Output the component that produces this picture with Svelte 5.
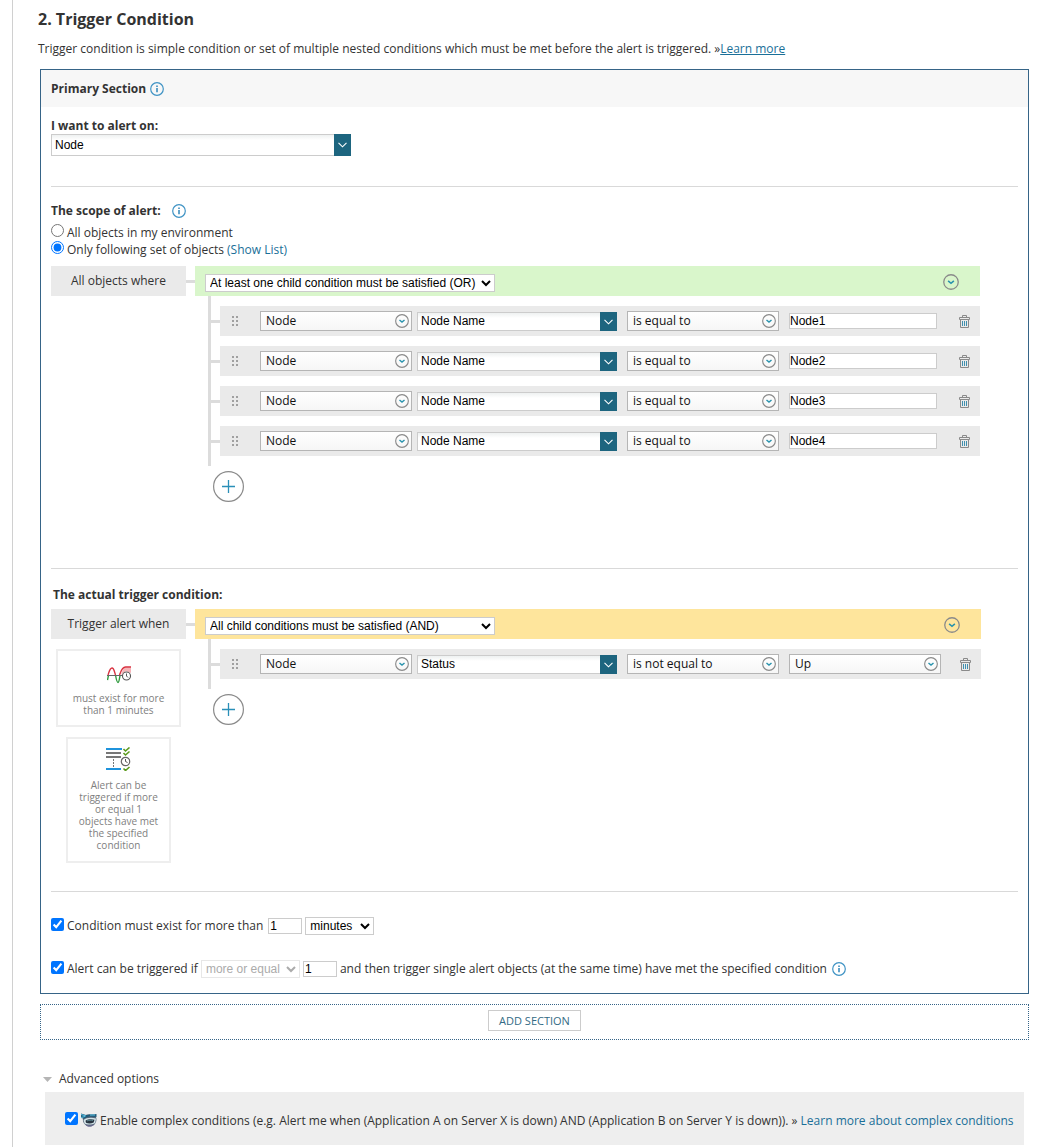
<script lang="ts">
  type Condition = {
    id: number;
    object: string;
    field: string;
    operator: string;
    value: string;
    kind: 'text' | 'select';
  };

  type Group = {
    id: string;
    label: string;
    tone: 'any' | 'all';
    mode: string;
    conditions: Condition[];
  };

  const OR = 'At least one child condition must be satisfied (OR)';
  const AND = 'All child conditions must be satisfied (AND)';

  let alertOn = $state('Node');
  let scopeType = $state('set');
  let mustExist = $state(true);
  let duration = $state('1');
  let unit = $state('minutes');
  let limitObjects = $state(true);
  let comparison = $state('more or equal');
  let objectCount = $state('1');
  let complexEnabled = $state(true);
  let advancedOpen = $state(true);

  let scope: Group = $state({
    id: 'scope',
    label: 'All objects where',
    tone: 'any',
    mode: OR,
    conditions: [1, 2, 3, 4].map((n) => ({
      id: n,
      object: 'Node',
      field: 'Node Name',
      operator: 'is equal to',
      value: `Node${n}`,
      kind: 'text',
    })),
  });

  let trigger: Group = $state({
    id: 'trigger',
    label: 'Trigger alert when',
    tone: 'all',
    mode: AND,
    conditions: [
      { id: 1, object: 'Node', field: 'Status', operator: 'is not equal to', value: 'Up', kind: 'select' },
    ],
  });

  function addCondition(group: Group) {
    const last = group.conditions[group.conditions.length - 1];
    const id = Math.max(0, ...group.conditions.map((c) => c.id)) + 1;
    group.conditions.push({
      id,
      object: 'Node',
      field: last?.field ?? 'Node Name',
      operator: 'is equal to',
      value: '',
      kind: last?.kind ?? 'text',
    });
  }

  function removeCondition(group: Group, id: number) {
    group.conditions = group.conditions.filter((c) => c.id !== id);
  }
</script>

{#snippet infoIcon()}
  <svg class="info" viewBox="0 0 14 14" width="14" height="14" aria-hidden="true">
    <circle cx="7" cy="7" r="6.3" fill="none" stroke="#3f93c4" stroke-width="1.2" />
    <path d="M7 6v4.3M7 3.6v1.4" stroke="#2f86ba" stroke-width="1.5" />
  </svg>
{/snippet}

{#snippet circleChevron(size: number)}
  <svg class="circle-chevron" viewBox="0 0 15 15" width={size} height={size} aria-hidden="true">
    <circle cx="7.5" cy="7.5" r="6.8" fill="none" stroke="#8a8a8a" stroke-width="1.2" />
    <path d="M4.8 6.4l2.7 2.3 2.7-2.3" fill="none" stroke="#2a93ad" stroke-width="1.5" />
  </svg>
{/snippet}

{#snippet pick(item: Condition, key: 'object' | 'operator' | 'value', label: string)}
  <div class="pick">
    <select aria-label={label} bind:value={item[key]}>
      <option>{item[key]}</option>
    </select>
    {@render circleChevron(14)}
  </div>
{/snippet}

{#snippet chevronBlock()}
  <span class="chevron-block">
    <svg viewBox="0 0 9 6" width="9" height="6" aria-hidden="true">
      <path d="M0.5 0.8l4 4 4-4" fill="none" stroke="#fff" stroke-width="1.1" />
    </svg>
  </span>
{/snippet}

{#snippet builder(group: Group)}
  <div class="builder">
    <div class="bar {group.tone}">
      <select class="native mode" aria-label="Child conditions" bind:value={group.mode}>
        <option>{OR}</option>
        <option>{AND}</option>
      </select>
      <button type="button" class="icon-button" aria-label="Group actions">
        {@render circleChevron(16)}
      </button>
    </div>

    <ul class="conditions">
      {#each group.conditions as item (item.id)}
        <li>
          <div class="row">
            <svg class="handle" viewBox="0 0 6 10" width="6" height="10" aria-hidden="true">
              <path d="M0 0h2v2H0zM4 0h2v2H4zM0 4h2v2H0zM4 4h2v2H4zM0 8h2v2H0zM4 8h2v2H4z" fill="#a0a0a0" />
            </svg>
            {@render pick(item, 'object', 'Object')}
            <div class="combo">
              <input type="text" aria-label="Property" bind:value={item.field} />
              {@render chevronBlock()}
            </div>
            {@render pick(item, 'operator', 'Operator')}
            {#if item.kind === 'select'}
              {@render pick(item, 'value', 'Value')}
            {:else}
              <input class="box value" type="text" aria-label="Value" bind:value={item.value} />
            {/if}
            <button
              type="button"
              class="icon-button remove"
              aria-label="Delete condition"
              onclick={() => removeCondition(group, item.id)}
            >
              <svg viewBox="0 0 11 13" width="11" height="13" aria-hidden="true">
                <path d="M0.5 4.500V2.500h10v2zM3.500 2.500v-2h4v2M1.500 4.500v8h8v-8" fill="none" stroke="#8a8a8a" />
                <path d="M3.500 6v5M5.500 6v5M7.500 6v5" stroke="#3f8fae" />
              </svg>
            </button>
          </div>
        </li>
      {/each}
    </ul>

    <button type="button" class="icon-button add" aria-label="Add condition" onclick={() => addCondition(group)}>
      <svg viewBox="0 0 31 31" width="31" height="31" aria-hidden="true">
        <circle cx="15.5" cy="15.5" r="14.9" fill="#fff" stroke="#8a8a8a" stroke-width="1.2" />
        <path d="M9 15.5h13M15.5 9v13" stroke="#2a8fb8" stroke-width="1.3" />
      </svg>
    </button>
  </div>
{/snippet}

<main class="page">
  <h2>2. Trigger Condition</h2>
  <p class="intro">
    Trigger condition is simple condition or set of multiple nested conditions which must be met before the alert is
    triggered. »<a class="underlined" href="#learn-more">Learn more</a>
  </p>

  <section class="section">
    <header>
      <h3>Primary Section</h3>
      {@render infoIcon()}
    </header>

    <div class="block alert-on">
      <label class="title" for="alert-on">I want to alert on:</label>
      <div class="combo large">
        <input id="alert-on" type="text" bind:value={alertOn} />
        {@render chevronBlock()}
      </div>
    </div>

    <div class="block scope">
      <div class="scope-title">
        <h4 class="title">The scope of alert:</h4>
        {@render infoIcon()}
      </div>
      <div class="radio">
        <input id="scope-all" type="radio" name="scope" value="all" bind:group={scopeType} />
        <label for="scope-all">All objects in my environment</label>
      </div>
      <div class="radio">
        <input id="scope-set" type="radio" name="scope" value="set" bind:group={scopeType} />
        <label for="scope-set">Only following set of objects</label>
        <a href="#show-list">(Show List)</a>
      </div>
      <div class="tree">
        <div class="side">
          <div class="tree-label">{scope.label}</div>
        </div>
        {@render builder(scope)}
      </div>
    </div>

    <div class="block actual">
      <h4 class="title indented">The actual trigger condition:</h4>
      <div class="tree wide">
        <div class="side">
          <div class="tree-label">{trigger.label}</div>
          <div class="card">
            <svg viewBox="0 0 24 18" width="24" height="18" aria-hidden="true">
              <path d="M14 9C16 3 17 1.500 19 1.500H24V7L19 5l-5 4z" fill="#f6b4b8" />
              <path d="M1 9C2 6 3 2 5 2s2.500 4 3.500 7M12.500 9C14 5 15 1 18.500 1H24" fill="none" stroke="#d8303f" stroke-width="1.4" />
              <path d="M0.500 14C1 12 1 11 1.500 9.500M8.500 9c.7 4 1.500 7.500 2.500 7.500s1.500-4 2-7" fill="none" stroke="#2f9a3d" stroke-width="1.4" />
              <path d="M0 9.500h15" stroke="#666" />
              <circle cx="19.500" cy="10" r="4" fill="#fff" stroke="#555" stroke-width="1.1" />
              <path d="M19.500 7.500V10l1.500 1.500" fill="none" stroke="#555" />
            </svg>
            <p>must exist for more than 1 minutes</p>
          </div>
          <div class="card narrow">
            <svg viewBox="0 0 25 24" width="25" height="24" aria-hidden="true">
              <path d="M0 2h16M0 22h15" stroke="#1f93dc" stroke-width="2" />
              <path d="M0 6h15M0 10h15" stroke="#777" stroke-width="2" />
              <path d="M7.500 12v9" stroke="#777" stroke-dasharray="2 1" />
              <path d="M17.500 2l2 2 4-3.500M17.500 6l2 2 4-3.500M17.500 21.500l2 2 4-3.500" fill="none" stroke="#5a9a1c" stroke-width="1.6" />
              <circle cx="19.500" cy="14.500" r="4.200" fill="#fff" stroke="#666" stroke-width="1.2" />
              <path d="M19.500 12v2.500l2 1" fill="none" stroke="#555" />
            </svg>
            <p>Alert can be triggered if more or equal 1 objects have met the specified condition</p>
          </div>
        </div>
        {@render builder(trigger)}
      </div>
    </div>

    <div class="block limits">
      <div class="line">
        <input id="must-exist" type="checkbox" bind:checked={mustExist} />
        <label class="spaced" for="must-exist">Condition must exist for more than</label>
        <input class="box number" type="text" aria-label="Duration" bind:value={duration} />
        <select class="native unit" aria-label="Duration unit" bind:value={unit}>
          <option>seconds</option>
          <option>minutes</option>
          <option>hours</option>
        </select>
      </div>
      <div class="line">
        <input id="limit-objects" type="checkbox" bind:checked={limitObjects} />
        <label for="limit-objects">Alert can be triggered if</label>
        <select class="native comparison" aria-label="Comparison" disabled bind:value={comparison}>
          <option>more or equal</option>
        </select>
        <input class="box number" type="text" aria-label="Object count" bind:value={objectCount} />
        <span class="spaced">and then trigger single alert objects (at the same time) have met the specified condition</span>
        {@render infoIcon()}
      </div>
    </div>
  </section>

  <div class="add-section">
    <button type="button">ADD SECTION</button>
  </div>

  <button
    type="button"
    class="advanced-toggle"
    aria-expanded={advancedOpen}
    onclick={() => (advancedOpen = !advancedOpen)}
  >
    <svg viewBox="0 0 9 5" width="9" height="5" aria-hidden="true"><path d="M0 0h9L4.500 5z" fill="#b5b5b5" /></svg>
    Advanced options
  </button>

  {#if advancedOpen}
    <div class="advanced line">
      <input id="complex" type="checkbox" bind:checked={complexEnabled} />
      <svg class="goggles" viewBox="0 0 16 14" width="16" height="14" aria-hidden="true">
        <path d="M2 4C4 1 12 0 15 4c1.500 4-1 9-6 9.500C4 13.500 1 9 2 4z" fill="#56677a" />
        <path d="M0 0.500l5 1.500L15.500 1v3L8 3.500 3 5.500 0 5z" fill="#1f5a78" />
        <path d="M0 1.500l5 1.500M0 4.500l4-1M9 2h5" stroke="#5ec4e6" />
        <path d="M2.500 7C5 4.500 11 4 15 5.500l-.8 4.500C11 12 6 12 3.500 10.500z" fill="#d3e3e8" />
        <path d="M4.500 7.800C7 6 11 6 13.500 6.800l-.8 2.700C10 10.800 7 10.500 5 9.800z" fill="#27343f" />
        <path d="M6 8c2-1 4-1 6-.6" fill="none" stroke="#6fa3b0" stroke-width=".8" />
        <path d="M5 12.300c2.500 1.200 5 1.200 7.500-.3" fill="none" stroke="#75709a" />
      </svg>
      <label for="complex">
        Enable complex conditions (e.g. Alert me when (Application A on Server X is down) AND (Application B on Server Y
        is down)).
      </label>
      <span>» <a href="#complex-conditions">Learn more about complex conditions</a></span>
    </div>
  {/if}
</main>

<style>
  :global(body) {
    margin: 0;
    background: #fff;
  }

  .page {
    box-sizing: border-box;
    min-height: 100vh;
    margin-left: 12px;
    padding: 8px 12px 2px 25px;
    border-left: 1px solid #d0d0d0;
    color: #333;
    font: 12px/18px 'Open Sans', sans-serif;
  }

  h2,
  h3,
  h4,
  p {
    margin: 0;
  }

  h2 {
    font-size: 16px;
    line-height: 22px;
  }

  h3,
  .title {
    font-size: 12px;
    font-weight: 700;
    line-height: 18px;
  }

  a {
    color: #1a6f98;
    text-decoration: none;
  }

  .underlined {
    text-decoration: underline;
  }

  svg {
    display: block;
    flex: none;
  }

  input,
  select,
  button {
    box-sizing: border-box;
    margin: 0;
    border-radius: 0;
    font: 12px 'Liberation Sans', Arial, sans-serif;
  }

  input[type='checkbox'],
  input[type='radio'] {
    flex: none;
    width: 13px;
    height: 13px;
  }

  .icon-button {
    display: block;
    padding: 0;
    border: 0;
    background: none;
    cursor: pointer;
  }

  .intro {
    margin: 10px 0 11px;
  }

  .section {
    margin-left: 2px;
    border: 1px solid #366487;
  }

  header {
    display: flex;
    align-items: center;
    gap: 4px;
    height: 37px;
    padding: 0 10px;
    background: #f7f7f7;
  }

  .block {
    margin: 0 10px;
  }

  .block + .block {
    border-top: 1px solid #d9d9d9;
  }

  .alert-on {
    padding: 10px 0 30px;
  }

  .alert-on .title {
    display: block;
    line-height: 17px;
  }

  .combo {
    display: flex;
    width: 200px;
    height: 19px;
  }

  .combo input {
    flex: 1;
    min-width: 0;
    padding: 0 3px;
    border: 1px solid #ccc;
    border-right: 0;
    background: linear-gradient(#eef1f1, #fff 5px);
    color: #000;
  }

  .combo.large {
    width: 300px;
    height: 22px;
  }

  .chevron-block {
    display: grid;
    place-items: center;
    width: 17px;
    background: #1d657f;
  }

  .row .chevron-block {
    padding-top: 2px;
    box-sizing: border-box;
  }

  .scope {
    padding: 15px 0 66px;
  }

  .scope-title {
    display: flex;
    align-items: center;
    gap: 11px;
    margin-bottom: 4px;
  }

  .radio {
    display: flex;
    gap: 3px;
    height: 17px;
  }

  .tree {
    display: grid;
    grid-template-columns: 144px 1fr;
    margin: 8px 38px 0 0;
  }

  .tree.wide {
    margin: 5px 37px 0 0;
  }

  .side {
    display: flex;
    flex-direction: column;
    align-items: center;
    gap: 10px;
    padding-right: 9px;
  }

  .tree-label {
    display: grid;
    grid-template-columns: 135px 9px;
    align-items: center;
    width: 144px;
    height: 30px;
    margin-right: -9px;
    background: linear-gradient(to right, #eaeaea 135px, transparent 135px);
    text-align: center;
  }

  .tree-label::after {
    content: '';
    height: 3px;
    background: #dcdcdc;
  }

  .bar {
    display: flex;
    align-items: flex-start;
    justify-content: space-between;
    height: 30px;
    padding: 8px 21px 0 10px;
    box-sizing: border-box;
  }

  .bar.any {
    background: #d9f6cb;
  }

  .bar.all {
    background: #fee59c;
  }

  .native {
    height: 18px;
    padding: 0;
    border: 1px solid #ccc;
    background-color: #fff;
    color: #000;
  }

  .mode {
    width: 290px;
  }

  .conditions {
    display: grid;
    gap: 10px;
    margin: 0 0 0 13px;
    padding: 10px 0;
    border-left: 3px solid #dcdcdc;
    list-style: none;
  }

  .conditions li {
    padding-left: 9px;
    background: linear-gradient(#dcdcdc, #dcdcdc) left center / 9px 3px no-repeat;
  }

  .row {
    display: grid;
    grid-template-columns: 28px 157px 210px 162px 1fr 18px;
    align-items: center;
    height: 30px;
    padding: 0 10px 0 12px;
    background: #eaeaea;
  }

  .pick {
    display: grid;
    grid-template-columns: 1fr 17px;
    align-items: center;
    width: 152px;
  }

  .pick select {
    grid-area: 1 / 1 / 2 / 3;
    height: 20px;
    padding: 0 20px 1px 5px;
    border: 1px solid #b5b5b5;
    appearance: none;
    background: linear-gradient(#fff, #f6f6f6);
    color: #111;
    font-family: 'Open Sans', sans-serif;
  }

  .pick .circle-chevron {
    grid-area: 1 / 2;
    pointer-events: none;
  }

  .box {
    height: 16px;
    padding: 0 1px;
    border: 1px solid #ccc;
    background: #fff;
    color: #000;
  }

  .value {
    width: 148px;
    padding: 0;
  }

  .remove {
    justify-self: end;
  }

  .add {
    margin: 5px 0 0 18px;
  }

  .actual {
    padding: 17px 0 28px;
  }

  .indented {
    padding-left: 2px;
  }

  .card {
    display: flex;
    flex-direction: column;
    align-items: center;
    gap: 8px;
    box-sizing: border-box;
    width: 125px;
    padding: 15px 8px 9px;
    border: 2px solid #eee;
    color: #808080;
    font-size: 10px;
    line-height: 12px;
    text-align: center;
  }

  .card.narrow {
    width: 105px;
    padding: 8px 10px 10px;
  }

  .limits {
    padding: 25px 0 15px;
  }

  .line {
    display: flex;
    align-items: center;
    gap: 3px;
    height: 18px;
  }

  .line input[type='checkbox'] {
    margin-bottom: 4px;
  }

  .line + .line {
    margin-top: 25px;
  }

  .spaced {
    margin-right: 2px;
  }

  .number {
    width: 34px;
  }

  .unit {
    width: 69px;
  }

  .comparison {
    width: 99px;
  }

  .comparison:disabled {
    border-color: #ddd;
    color: #888;
  }

  .add-section {
    display: flex;
    justify-content: center;
    margin: 10px 0 0 2px;
    padding: 5px 0 8px;
    border: 1px dotted #366487;
  }

  .add-section button {
    width: 93px;
    height: 21px;
    padding: 0;
    border: 1px solid #ccc;
    background: #fff;
    color: #336b85;
    font: 11px 'Open Sans', sans-serif;
  }

  .advanced-toggle {
    display: flex;
    align-items: center;
    gap: 7px;
    margin: 30px 0 4px 5px;
    padding: 0;
    border: 0;
    background: none;
    color: #333;
    font: 12px/18px 'Open Sans', sans-serif;
  }

  .advanced {
    box-sizing: border-box;
    height: 53px;
    margin: 0 5px 0 7px;
    padding: 4px 0 0 20px;
    background: #eee;
    white-space: nowrap;
  }

  .goggles {
    margin-bottom: 2px;
  }
</style>
